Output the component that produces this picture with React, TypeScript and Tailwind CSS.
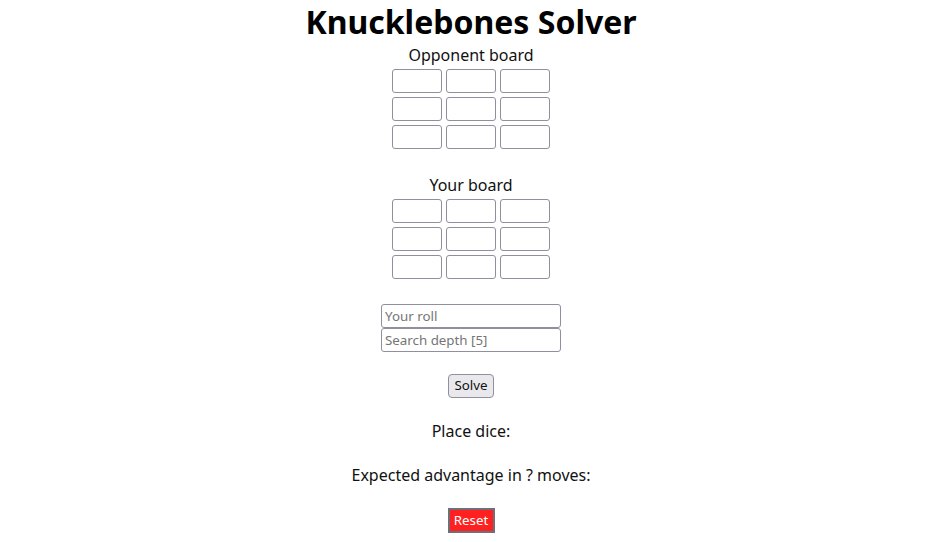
import React from 'react';

const cell =
  'w-[50px] h-[24px] border border-[#8f8f9d] rounded-[3px] px-[2px] text-[13.333px] bg-white outline-none';

const field =
  'w-[180px] h-[24px] border border-[#8f8f9d] rounded-[3px] px-[3px] text-[13.333px] placeholder:text-[#757575] outline-none';

function Board({ label, className }: { label: string; className?: string }) {
  return (
    <div className={`flex flex-col items-center ${className ?? ''}`}>
      <div className="text-[16px] leading-[22px]">{label}</div>
      <div className="mt-[3px] grid grid-cols-3 gap-[4px]">
        {Array.from({ length: 9 }).map((_, i) => (
          <input key={i} className={cell} />
        ))}
      </div>
    </div>
  );
}

export default function App() {
  return (
    <div
      className="flex flex-col items-center pl-[2px] text-[#111] bg-white min-h-[542px]"
      style={{ fontFamily: '"Noto Sans", sans-serif' }}
    >
      <h1 className="text-[32px] font-bold leading-[44px] text-black">Knucklebones Solver</h1>
      <Board label="Opponent board" />
      <Board label="Your board" className="mt-[25px]" />

      <div className="mt-[25px] flex flex-col">
        <input placeholder="Your roll" className={field} />
        <input placeholder="Search depth [5]" className={field} />
      </div>

      <button className="mt-[22px] h-[24px] w-[46px] bg-[#e9e9ed] border border-[#8f8f9d] rounded-[4px] text-[13.333px] leading-none">
        Solve
      </button>

      <p className="mt-[22px] text-[16px] leading-[22px]">Place dice:</p>
      <p className="mt-[22px] text-[16px] leading-[22px]">Expected advantage in ? moves:</p>

      <button className="mt-[22px] h-[25px] w-[47px] bg-[#ff2020] text-white border-2 border-[#6f6f7a] text-[13.333px] leading-none">
        Reset
      </button>
    </div>
  );
}
